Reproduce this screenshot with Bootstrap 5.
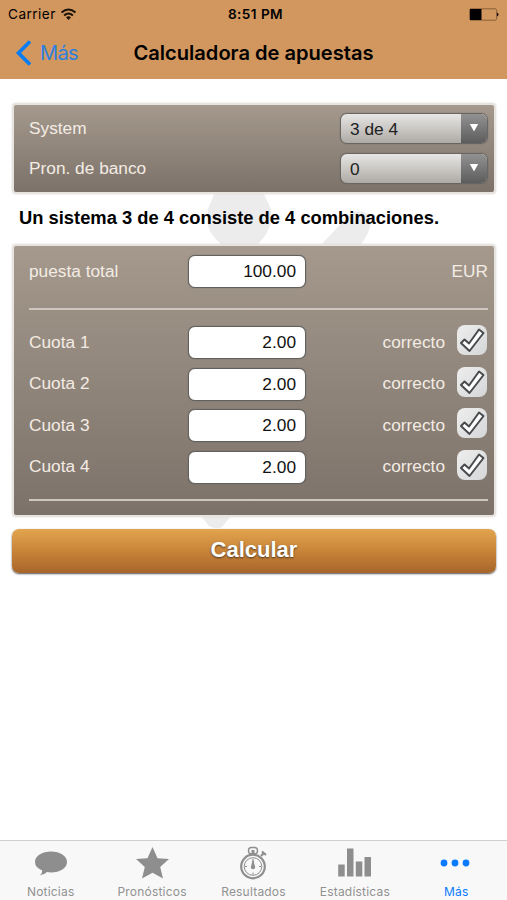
<!DOCTYPE html>
<html lang="es">
<head>
<meta charset="utf-8">
<meta name="viewport" content="width=device-width, initial-scale=1">
<title>Calculadora de apuestas</title>
<link href="https://cdn.jsdelivr.net/npm/bootstrap@5.3.0/dist/css/bootstrap.min.css" rel="stylesheet">
<style>
  body { font-family: "Liberation Sans", sans-serif; font-size: 17.3px; line-height: 20px; color: #000; height: 900px; overflow: hidden; background: #fff; }
  .app-header { background: #d1975f; height: 79px; font-family: Inter, sans-serif; }
  .status-line { height: 28px; font-size: 13.6px; letter-spacing: .45px; padding: 0 8px; }
  .side { flex: 1 1 0; }
  .title-line { height: 49px; font-size: 20px; line-height: 24px; padding: 0 15px; }
  .title-line .back { color: #2b80e0; text-decoration: none; letter-spacing: -.6px; padding-top: 5px; }
  .title-line h1 { font-size: 20.1px; line-height: 24px; font-weight: 600; }
  svg { display: block; flex: none; }
  .fit { white-space: nowrap; }
  main { padding: 24px 11px 0 12px; position: relative; }
  .watermark { position: absolute; left: 190px; top: 105px; }
  .panel { position: relative; border: 2px solid #e7e3de; border-radius: 4px; background: linear-gradient(#a5998d, #7c7269); color: #f3ece4; box-shadow: 0 0 2px #d8d4ce; }
  .panel-a { height: 91px; padding: 8px 6px 0 15px; }
  .panel-b { height: 273px; padding: 0 6px 0 15px; }
  .pick { width: 148px; height: 31px; border: 1px solid #686662; box-shadow: 0 0 1px #55534f; border-radius: 7px; background: linear-gradient(#e7e6e4, #aeaaa5); color: #222; overflow: hidden; line-height: 30px; }
  .pick .arrow { width: 26px; background: linear-gradient(#929292, #5c5c5c); color: #fff; }
  .pick .value { padding-left: 9px; }
  .second { margin-top: 9px; }
  .summary { position: relative; font-size: 18.35px; font-weight: 700; padding: 14px 0 0 7px; height: 50px; }
  .line { display: grid; grid-template-columns: 159px 118px 1fr 31px; align-items: center; height: 41.5px; }
  .line-total { height: 51px; }
  .cap { position: relative; top: -1px; }
  .amount { height: 33px; border: 1px solid #62605d; box-shadow: 0 0 1px #55534f; border-radius: 7px; background: #fff; color: #111; text-align: right; padding: 0 9px; line-height: 31px; font-size: 17.3px; }
  .rule { height: 2px; background: #cdc7c0; }
  .rule-top { margin: 11px 0 12px; }
  .rule-end { margin-top: 11px; }
  .tick { width: 30px; height: 30px; margin-bottom: 5px; border-radius: 8px; background: linear-gradient(135deg,#eee,#d5d6d8); }
  .btn-calc { position: relative; height: 44px; margin-top: 12px; border: 0; border-radius: 7px; background: linear-gradient(#e2a54f, #c98439 50%, #a7652b); color: #fff; font-size: 22px; font-weight: 700; line-height: 24px; padding: 0 0 2px; text-shadow: 0 1px 2px #4a3520; box-shadow: 0 1px 2px #555; }
  .tabs { height: 60px; background: #f8f8f8; border-top: 1px solid #d0d0d0; font-family: Inter, sans-serif; font-size: 12px; line-height: 14px; letter-spacing: .2px; }
  .tabs a { width: 101.4px; color: #929292; text-decoration: none; padding-top: 5px; }
  .tabs a span { padding-top: 5px; }
  .tabs a.active { color: #0a7aff; }
</style>
</head>
<body class="d-flex flex-column">
<header class="app-header">
  <div class="status-line d-flex align-items-center">
    <div class="side d-flex align-items-center"><span class="fit">Carrier</span>
      <svg class="ms-1" width="17" height="13" viewBox="0 0 16 13" fill="none" stroke="#1b1209" stroke-width="2"><path d="M1 4.500Q8-1.500 15 4.500M3.600 7.400Q8 3.600 12.400 7.400"/><path d="M8 12 5.500 9.200Q8 7.300 10.500 9.200Z" fill="#1b1209" stroke="none"/></svg></div>
    <span class="fw-semibold fit ps-1">8:51 PM</span>
    <div class="side d-flex justify-content-end"><svg width="30" height="13" viewBox="0 0 30 13"><rect x=".6" y=".8" width="27" height="11.400" rx="1.500" fill="none" stroke="#8a6036"/><path d="M1 1h11.500v11H1z"/><path d="M28 4.500q3 2 0 4z"/></svg></div>
  </div>
  <div class="title-line d-flex align-items-center">
    <div class="side"><a href="#" class="back d-inline-flex align-items-center"><svg class="me-2" width="17" height="26" viewBox="0 0 17 26" fill="none" stroke="#087cf5" stroke-width="3.600"><path d="M15 1.500 3.500 13 15 24.500"/></svg><span class="fit">Más</span></a></div>
    <h1 class="m-0 fit">Calculadora de apuestas</h1>
    <div class="side"></div>
  </div>
</header>

<main class="flex-grow-1">
  <svg class="watermark" width="200" height="350" viewBox="190 184 200 350" fill="#ececec"><path d="M215 192H263L271 209V222Q268 235 257 245H222Q211 236 208 226V209Z"/><path d="M320 246 349 215Q358 208 368 214 376 224 360 246ZM201 516H231L222 527Q216 530 209 526Z"/></svg>
  <section class="panel panel-a">
    <div class="d-flex justify-content-between align-items-center"><span class="cap fit">System</span>
      <div class="pick d-flex"><span class="value flex-grow-1">3 de 4</span><span class="arrow d-flex align-items-center justify-content-center"><svg width="10" height="9" viewBox="0 0 10 9"><path d="M.8 0h8.400L5 7.500z" fill="#fff"/></svg></span></div></div>
    <div class="second d-flex justify-content-between align-items-center"><span class="cap fit">Pron. de banco</span>
      <div class="pick d-flex"><span class="value flex-grow-1">0</span><span class="arrow d-flex align-items-center justify-content-center"><svg width="10" height="9" viewBox="0 0 10 9"><path d="M.8 0h8.400L5 7.500z" fill="#fff"/></svg></span></div></div>
  </section>
  <p class="summary m-0"><span class="fit">Un sistema 3 de 4 consiste de 4 combinaciones.</span></p>
  <section class="panel panel-b">
    <div class="line line-total"><span class="cap">puesta total</span><div class="amount">100.00</div><span></span><span class="cap d-flex justify-content-end">EUR</span></div>
    <div class="rule rule-top"></div>
  </section>
  <button class="btn btn-calc w-100">Calcular</button>
</main>

<nav class="tabs d-flex">
  <a href="#" class="d-flex flex-column align-items-center"><svg width="34" height="34" viewBox="0 0 34 34" fill="#8e8e8e"><path d="M17 5.500c9 0 16 4.500 16 10.500s-7 10.500-16 10.500q-2 0-4-.4-2.500 2.500-7 3.200 2.500-2 2.200-4.800Q1 21.500 1 16C1 10 8 5.500 17 5.500Z"/></svg><span>Noticias</span></a>
  <a href="#" class="d-flex flex-column align-items-center"><svg width="34" height="34" viewBox="0 0 34 34" fill="#8e8e8e"><path d="m17.500 1 5 11.200 11.500.8-8.800 7.900 2.800 11.600-10.500-5.800L7 32.500l2.800-11.600L1 13l11.500-.8Z"/></svg><span>Pronósticos</span></a>
  <a href="#" class="d-flex flex-column align-items-center"><svg width="34" height="34" viewBox="0 0 34 34" fill="none" stroke="#8e8e8e"><circle cx="17" cy="20.500" r="11.800" stroke-width="2.200"/><circle cx="17" cy="20.500" r="8.800"/><rect x="12.500" y="1.500" width="9" height="6.500" rx="3" stroke-width="1.400"/><path d="M17 4v5" stroke-width="3"/><path d="m25 10 3-3M26 5.500l4 3.500" stroke-width="2.200"/><path d="M17 13v4M17 26.500v2M9 20.500h2M23 20.500h2"/><path d="m17 13 2.200 8a2.200 2.200 0 0 1-4.400 0z" fill="#8e8e8e" stroke="none"/></svg><span>Resultados</span></a>
  <a href="#" class="d-flex flex-column align-items-center"><svg width="34" height="34" viewBox="0 0 34 34" fill="#8e8e8e"><path d="M.2 18.500h6.500v12H.2zM9 2.500h6.500v28H9zM17.800 15.500h6.500v15h-6.500zM26.500 11H33v19.500h-6.500z"/></svg><span>Estadísticas</span></a>
  <a href="#" class="active d-flex flex-column align-items-center"><svg width="34" height="34" viewBox="0 0 34 34" fill="#0a7aff"><circle cx="5" cy="17" r="3.400"/><circle cx="16" cy="17" r="3.400"/><circle cx="27" cy="17" r="3.400"/></svg><span>Más</span></a>
</nav>
<script src="https://cdn.jsdelivr.net/npm/bootstrap@5.3.0/dist/js/bootstrap.bundle.min.js"></script>
<script>
  const tick = '<div class="tick"><svg width="30" height="30" viewBox="0 0 30 30"><path d="M4 18 7.500 14.500 12 18.500 22 4.500l4.500 3.500L12.500 26Z" fill="#fff" stroke="#484b4d" stroke-width="2" stroke-linejoin="round"/></svg></div>';
  document.querySelector('.panel-b').insertAdjacentHTML('beforeend',
    [1, 2, 3, 4].map(n => '<div class="line"><span class="cap">Cuota ' + n + '</span><div class="amount">2.00</div><span class="cap text-end pe-2 me-1">correcto</span>' + tick + '</div>').join('') +
    '<div class="rule rule-end"></div>');
</script>
</body>
</html>
